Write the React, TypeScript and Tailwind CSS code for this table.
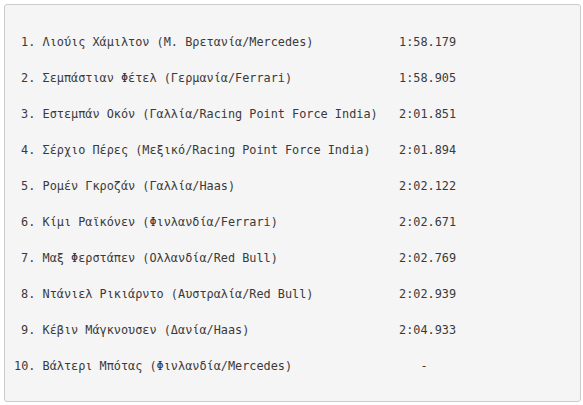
const results = [
  { pos: 1, name: "Λιούις Χάμιλτον (Μ. Βρετανία/Mercedes)", time: "1:58.179" },
  { pos: 2, name: "Σεμπάστιαν Φέτελ (Γερμανία/Ferrari)", time: "1:58.905" },
  { pos: 3, name: "Εστεμπάν Οκόν (Γαλλία/Racing Point Force India)", time: "2:01.851" },
  { pos: 4, name: "Σέρχιο Πέρες (Μεξικό/Racing Point Force India)", time: "2:01.894" },
  { pos: 5, name: "Ρομέν Γκροζάν (Γαλλία/Haas)", time: "2:02.122" },
  { pos: 6, name: "Κίμι Ραϊκόνεν (Φινλανδία/Ferrari)", time: "2:02.671" },
  { pos: 7, name: "Μαξ Φερστάπεν (Ολλανδία/Red Bull)", time: "2:02.769" },
  { pos: 8, name: "Ντάνιελ Ρικιάρντο (Αυστραλία/Red Bull)", time: "2:02.939" },
  { pos: 9, name: "Κέβιν Μάγκνουσεν (Δανία/Haas)", time: "2:04.933" },
  { pos: 10, name: "Βάλτερι Μπότας (Φινλανδία/Mercedes)", time: "-" },
];

export default function App() {
  return (
    <div className="bg-white w-[583px] h-[405px] p-[4px]">
      <div className="h-[398px] w-[577px] border border-[#cccccc] rounded-[3px] bg-[#f5f5f5] pl-[9px] pt-[20px] text-[#3a3a3a] font-['DejaVu_Sans_Mono',monospace] text-[11.85px]">
        {results.map((r) => (
          <div key={r.pos} className="flex h-[36px] items-center whitespace-pre">
            <span className="w-[3ch] text-right">{r.pos}.</span>
            <span className="w-[51ch] pl-[1ch]">{r.name}</span>
            <span className={r.time === "-" ? "pl-[3ch]" : ""}>{r.time}</span>
          </div>
        ))}
      </div>
    </div>
  );
}
